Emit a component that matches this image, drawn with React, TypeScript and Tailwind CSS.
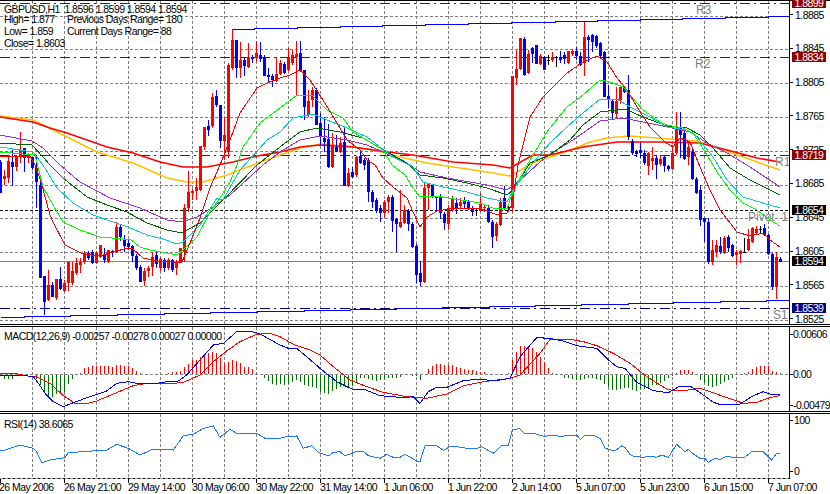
import type { ReactNode } from "react";

type Pt = [number, number];

const RED = "#ff0000";
const BLUE = "#0000ff";
const BLACK = "#000000";

// bars are 4px apart: [colour, wick top, body top, body bottom, wick bottom]
const r = (h: number, t: number, b: number, l: number) => [RED, h, t, b, l] as const;
const u = (h: number, t: number, b: number, l: number) => [BLUE, h, t, b, l] as const;
const d = (h: number, t: number, b: number, l: number) => [BLACK, h, t, b, l] as const;

const bars = [
  u(160, 162, 193, 193), r(170, 176, 179, 185), r(155, 161, 178, 183), u(150, 162, 167, 186), r(155, 157, 167, 171),
  r(132, 150, 157, 163), u(148, 148, 158, 172), r(153, 156, 158, 163), u(157, 157, 168, 170), u(155, 168, 182, 208),
  u(181, 185, 278, 278), u(276, 276, 302, 315), r(270, 285, 300, 301), u(282, 285, 297, 297), r(279, 279, 298, 300),
  u(267, 279, 289, 290), r(280, 283, 291, 292), r(262, 262, 283, 291), r(262, 271, 283, 285), r(258, 263, 273, 275),
  r(258, 262, 265, 273), r(251, 253, 262, 264), u(251, 253, 258, 260), u(250, 252, 263, 264), r(251, 253, 263, 264),
  r(245, 245, 257, 258), u(248, 255, 260, 263), r(250, 250, 262, 263), u(250, 251, 253, 257), r(222, 227, 252, 253),
  u(225, 227, 237, 241), u(235, 240, 246, 252), u(240, 243, 247, 250), u(245, 246, 256, 262), u(254, 256, 268, 270),
  u(265, 267, 282, 282), r(268, 271, 281, 286), r(266, 268, 271, 277), r(252, 257, 267, 276), u(252, 255, 264, 268),
  r(257, 259, 268, 271), u(258, 260, 268, 272), r(258, 260, 268, 270), u(259, 260, 270, 272), r(260, 262, 268, 275),
  r(248, 248, 262, 263), r(204, 208, 252, 262), r(171, 192, 208, 212), r(189, 191, 193, 200), r(178, 187, 191, 200),
  r(146, 146, 190, 191), r(127, 127, 147, 150), u(120, 126, 130, 136), r(93, 97, 126, 128), u(90, 96, 105, 107),
  u(105, 105, 141, 148), r(118, 135, 141, 160), r(63, 65, 152, 158), r(29, 40, 68, 70), u(40, 40, 68, 78),
  r(42, 60, 68, 78), u(58, 60, 66, 76), r(43, 57, 67, 68), u(55, 57, 59, 63), r(41, 53, 58, 62),
  u(42, 55, 59, 62), u(55, 57, 76, 76), u(68, 75, 77, 82), u(74, 76, 80, 87), r(57, 74, 81, 82),
  r(60, 63, 74, 75), u(62, 64, 73, 74), r(48, 58, 70, 71), r(50, 55, 63, 65), r(41, 54, 57, 96),
  u(41, 53, 71, 72), u(70, 70, 107, 120), r(90, 101, 115, 117), r(87, 90, 100, 107), u(88, 90, 125, 125),
  u(113, 123, 136, 145), u(117, 138, 142, 152), u(124, 139, 167, 168), r(133, 145, 167, 168), u(135, 147, 152, 152),
  r(137, 143, 152, 153), u(128, 142, 186, 186), r(168, 173, 186, 187), u(167, 172, 177, 178), r(156, 157, 175, 177),
  u(152, 156, 163, 164), u(158, 160, 165, 170), u(158, 160, 192, 202), u(190, 192, 202, 208), u(198, 200, 210, 213),
  u(205, 208, 213, 222), r(200, 202, 213, 218), r(195, 197, 202, 213), u(195, 197, 221, 232), u(218, 219, 224, 252),
  r(190, 222, 227, 228), r(205, 210, 223, 224), u(209, 211, 224, 231), u(222, 224, 247, 248), u(244, 246, 275, 283),
  u(261, 273, 282, 286), r(183, 188, 282, 283), r(183, 184, 188, 210), u(184, 185, 197, 198), u(196, 197, 198, 212),
  u(194, 196, 213, 219), u(212, 214, 223, 230), r(205, 208, 224, 230), r(196, 198, 210, 212), u(198, 203, 208, 214),
  r(198, 202, 206, 209), u(197, 201, 204, 209), u(200, 201, 208, 210), u(206, 208, 212, 216), d(208, 210, 211, 216),
  r(193, 204, 211, 212), r(205, 207, 208, 212), u(205, 208, 222, 223), u(220, 222, 237, 248), r(222, 224, 236, 241),
  r(198, 202, 225, 226), u(186, 198, 208, 210), d(206, 207, 208, 210), r(76, 76, 208, 212), r(50, 69, 78, 85),
  r(38, 38, 69, 70), u(37, 39, 75, 76), r(50, 54, 73, 74), u(47, 48, 54, 63), u(45, 45, 64, 64),
  r(54, 56, 64, 65), u(56, 57, 70, 70), d(55, 60, 61, 65), r(52, 57, 60, 62), d(56, 57, 58, 67),
  u(51, 57, 60, 63), u(52, 55, 59, 64), r(51, 51, 63, 64), r(49, 51, 54, 56), u(47, 51, 56, 60),
  u(52, 56, 65, 66), r(22, 37, 63, 76), u(35, 37, 40, 62), u(34, 35, 42, 52), u(35, 36, 46, 48),
  u(42, 43, 56, 58), u(51, 52, 97, 97), u(85, 96, 100, 108), u(99, 101, 113, 120), r(87, 101, 114, 118),
  r(86, 87, 100, 104), u(86, 87, 92, 93), u(75, 90, 137, 140), u(139, 141, 153, 155), u(150, 151, 154, 157),
  u(143, 150, 153, 158), u(150, 153, 163, 165), r(152, 153, 166, 175), r(147, 158, 161, 170), u(155, 158, 165, 179),
  r(155, 159, 164, 166), u(155, 157, 166, 172), u(165, 166, 169, 171), r(145, 153, 169, 170), r(112, 128, 153, 155),
  u(112, 127, 135, 158), u(131, 133, 159, 160), r(143, 147, 157, 165), u(150, 152, 179, 180), u(177, 179, 193, 194),
  u(185, 190, 220, 226), u(218, 218, 222, 242), u(218, 222, 262, 264), r(240, 250, 262, 265), r(240, 245, 252, 257),
  u(237, 246, 252, 254), r(236, 238, 253, 254), u(235, 237, 248, 252), u(244, 245, 256, 257), r(250, 252, 255, 265),
  r(250, 251, 254, 263), d(238, 252, 253, 253), r(229, 239, 250, 251), r(227, 228, 242, 243), r(226, 229, 233, 234),
  d(226, 229, 230, 233), u(224, 228, 235, 236), u(234, 235, 254, 255), u(253, 254, 287, 290), r(252, 257, 287, 299),
  u(257, 259, 262, 262),
];

const points = (s: string): Pt[] =>
  s.trim().split(/\s+/).map((p) => {
    const [x, y] = p.split(",").map(Number);
    return [x, y] as Pt;
  });

const fast = points("0,156 30,156 35,165 41,182 50,215 53,222 65,245 83,254 100,256 113,252 128,248 133,249 143,258 157,261 173,262 182,262 190,243 200,218 210,188 220,165 230,140 240,113 257,88 267,83 280,78 290,75 300,70 310,80 323,100 337,123 347,140 360,150 367,160 375,165 383,178 393,187 407,198 413,212 420,227 427,217 437,211 450,209 477,208 490,212 497,215 507,213 512,205 518,165 530,117 543,97 550,90 567,73 583,62 597,56 607,62 617,78 627,90 637,107 650,127 665,142 673,147 680,138 690,142 700,167 710,190 720,210 737,232 750,236 763,233 770,240 780,247");
const lime = points("0,152 35,155 43,187 53,205 63,222 80,230 100,237 123,239 130,239 140,247 150,250 177,255 183,250 197,237 210,212 220,198 230,182 237,165 243,147 260,123 280,108 297,95 313,96 327,110 343,118 353,132 370,142 383,150 392,165 405,175 413,188 420,197 437,196 467,201 480,203 493,208 507,208 513,192 527,165 547,132 550,128 567,107 583,95 600,80 610,82 623,87 643,110 660,122 667,125 683,128 693,133 707,155 717,172 730,190 743,203 757,210 770,220 780,226");
const cyan = points("0,147 33,152 43,165 57,188 73,203 93,215 113,222 128,227 147,235 163,239 177,244 183,242 200,225 217,198 223,200 240,170 267,140 280,132 293,118 313,114 327,120 347,128 367,137 380,147 393,157 413,167 423,182 443,187 467,192 487,198 507,202 513,190 533,163 550,143 567,127 583,113 600,99 617,99 630,107 650,117 667,127 687,130 697,137 713,157 727,180 743,197 763,203 780,208");
const darkGreen = points("0,143 32,145 43,157 50,165 63,178 87,197 107,205 127,212 147,223 167,230 182,233 200,223 223,200 257,165 280,147 300,132 317,128 340,132 363,138 380,148 407,163 420,175 443,178 467,183 487,188 507,195 513,190 530,163 550,155 570,140 583,125 600,112 625,109 643,117 667,126 687,128 700,135 713,148 730,168 750,180 780,195");
const purple = points("0,135 32,141 43,148 60,165 80,182 110,198 140,208 167,220 182,222 197,217 213,207 230,195 263,165 280,152 300,140 320,136 347,140 367,145 383,152 410,165 420,172 447,178 487,185 507,190 520,180 540,162 550,154 573,140 600,121 623,118 643,122 673,128 690,132 707,143 727,153 750,167 780,187");
const yellow = points("0,116 33,120 53,130 77,142 97,152 133,163 167,178 187,182 203,182 227,175 253,165 280,155 300,148 320,144 347,146 373,150 400,157 427,163 440,165 467,169 493,173 510,176 533,163 550,157 570,150 590,142 607,138 630,136 657,138 697,141 717,148 743,157 780,170");
const redSlow = points("0,117 33,122 50,128 67,133 107,147 133,153 160,162 183,167 207,167 233,162 257,156 280,152 300,147 320,145 353,147 387,152 413,155 453,162 493,165 510,168 533,155 550,155 583,147 617,142 660,142 700,143 727,150 757,158 780,162");

const stepped = (pts: Pt[]): Pt[] =>
  pts.flatMap(([x, y], i) => (i === 0 ? [[x, y] as Pt] : [[x, pts[i - 1][1]] as Pt, [x, y] as Pt]));

const r3Line = stepped(points("232,29.5 254,28.5 297,27.5 340,26.5 382,25.5 425,24.5 468,23.5 511,22.5 555,21.5 597,20.5 640,19.5 682,18.5 725,17.5 768,16.5 789,16.5"));
const s1Line = stepped(points("1,317.5 24,316.5 70,315.5 117,314.5 164,313.5 210,312.5 257,311.5 304,310.5 350,309.5 396,308.5 442,307.5 489,306.5 535,305.5 581,304.5 628,303.5 673,302.5 720,301.5 766,300.5 789,300.5"));

// measured on the 3x crops, the three crops start at x = 0, 280 and 550
const crop = (left: number, s: string): Pt[] =>
  points(s).map(([x, y]) => [left + x / 3, 325 + y / 3] as Pt);

const macdMain = [
  ...crop(0, "0,150 60,150 100,155 115,175 135,205 160,230 190,245 215,235 250,222 290,208 320,198 350,175 385,170 420,177 470,175 500,170 535,168 560,150 600,105 640,60 670,55 710,20 750,18 780,27 840,60"),
  ...crop(280, "25,70 50,70 80,95 120,130 170,170 215,192 250,192 300,212 370,218 400,215 420,235 445,200 470,187 500,187 550,167 600,162 640,168 690,160 720,95 770,38"),
  ...crop(550, "0,40 40,48 80,62 100,65 140,70 170,100 200,125 225,130 260,172 310,197 355,203 390,183 420,183 460,210 490,232 515,240 570,237 610,212 640,200 670,210 690,208"),
];
const macdSignal = [
  ...crop(0, "0,145 45,145 85,153 110,155 150,175 190,212 225,235 255,237 290,228 340,207 400,182 430,177 520,175 550,172 600,150 640,110 680,78 720,50 770,28 810,25 840,35"),
  ...crop(280, "40,58 90,75 120,90 160,125 210,165 260,185 310,202 380,215 440,220 500,207 550,182 610,170 690,160 720,150 780,85"),
  ...crop(550, "0,43 60,43 100,50 140,62 190,85 240,115 290,155 350,192 370,197 400,197 450,190 500,207 580,235 620,232 660,218 690,212"),
];
const rsi = [
  ...crop(0, "0,375 15,375 60,360 100,370 110,380 125,413 150,405 195,398 205,383 250,380 290,377 320,375 350,358 385,370 420,390 460,372 490,372 520,375 550,332 580,328 610,310 640,303 660,337 690,313 710,325 770,325 795,340 840,340"),
  ...crop(280, "20,335 50,333 70,370 95,362 115,382 145,393 160,382 180,380 195,392 215,385 230,379 250,379 265,392 300,400 320,388 340,397 360,397 375,388 410,408 420,410 435,362 470,362 490,376 510,365 530,365 560,370 590,370 605,365 640,385 665,362 685,362 697,316 717,310 735,327 760,325 795,335"),
  ...crop(550, "0,330 30,334 80,330 92,344 105,330 130,331 150,340 165,370 195,378 215,363 225,367 240,388 250,394 280,397 300,393 320,397 335,390 355,397 380,358 405,380 415,373 430,387 450,400 465,400 475,412 495,400 510,403 530,393 550,398 585,396 605,380 640,380 665,405 680,385 690,385"),
];

const hist = [
  0, -4, -4, -4, -1, 0, 0, 0, 0, -4, -10, -17, -22, -22, -19, -18, -17, -9, -4, 0,
  1, 6, 7, 8, 8, 8, 8, 8, 7, 9, 9, 8, 8, 6, 3, 1, 0, 0, 0, 0,
  0, 0, 1, 2, 2, 3, 7, 10, 14, 14, 17, 19, 21, 22, 21, 16, 11, 12, 14, 13,
  11, 7, 7, 5, 1, 0, -3, -6, -9, -10,
  -9, -10, -9, -7, -5, -7, -10, -11, -12, -13, -17, -18, -19, -16, -14, -12, -10, -13, -11, -8,
  -3, -3, -4, -5, -6, -5, -4, -3, -3, -3, -2, 0, 0, -1, -1, -5, 0, 5, 8, 10,
  10, 9, 9, 9, 7, 6, 5, 4, 4, 3, 2, 2, 0, 0, 0, 0, 0, 1, 14, 22,
  28, 28, 28, 26, 22, 17, 12, 6, 1, 0,
  0, -3, -3, -4, -5, -5, -4, -3, -3, -4, -5, -9, -12, -15, -15, -14, -13, -13, -15, -16,
  -14, -14, -13, -10, -10, -8, -6, -3, -1, 1, 4, 4, 4, 2, 0, -5, -8, -11, -12, -11,
  -9, -7, -5, -3, 0, 0, 1, 2, 5, 7, 8, 8, 8, 3, 2, 1,
];

const priceY = (p: number) => 15.5 + ((1.8885 - p) / 0.004) * 33.8;

const gridX = Array.from({ length: 24 }, (_, i) => 32 * (i + 1) + 0.5);
const gridPrices = [1.8885, 1.8845, 1.8805, 1.8765, 1.8725, 1.8685, 1.8645, 1.8605, 1.8565, 1.8525];

const Line = ({ pts, color, width = 1, smooth = false }: { pts: Pt[]; color: string; width?: number; smooth?: boolean }) => (
  <polyline
    points={pts.map(([x, y]) => `${x},${y}`).join(" ")}
    fill="none"
    stroke={color}
    strokeWidth={width}
    shapeRendering={smooth ? "auto" : "crispEdges"}
  />
);

const HLine = ({ y, color, dash, width = 1 }: { y: number; color: string; dash?: string; width?: number }) => (
  <line x1={0} x2={789} y1={y} y2={y} stroke={color} strokeWidth={width} strokeDasharray={dash} shapeRendering="crispEdges" />
);

const VGrid = ({ top, bottom }: { top: number; bottom: number }) => (
  <>
    {gridX.map((x) => (
      <line key={x} x1={x} x2={x} y1={top} y2={bottom} stroke="#808080" strokeDasharray="3 2" shapeRendering="crispEdges" />
    ))}
  </>
);

function MainChart() {
  return (
    <svg className="block h-[323px] w-[789px]" viewBox="0 1 789 323">
      <VGrid top={1} bottom={324} />
      {gridPrices.map((p) => (
        <HLine key={p} y={Math.round(priceY(p)) + 0.5} color="#808080" dash="3 2" />
      ))}
      <HLine y={3.5} color="#8b0000" dash="10 4 2 4" />
      <HLine y={57.5} color="#8b0000" dash="10 4 2 4" />
      <HLine y={155.5} color="#8b0000" dash="10 4 2 4" />
      <HLine y={210.5} color="#000000" dash="3 2" />
      <HLine y={261.5} color="#808080" />
      <HLine y={308.5} color="#000080" dash="10 4 2 4" />
      <Line pts={r3Line} color="#0000ff" />
      <Line pts={s1Line} color="#0000ff" />
      <Line pts={yellow} color="#ffc000" width={1.5} smooth />
      <Line pts={redSlow} color="#ff0000" width={1.5} smooth />
      {bars.map(([c, h, t, b, l], i) => (
        <g key={i} shapeRendering="crispEdges">
          <rect x={4 * i} y={h} width={1} height={l - h} fill={c} />
          <rect x={4 * i - 1} y={t} width={3} height={Math.max(b - t, 1)} fill={c} />
        </g>
      ))}
      <Line pts={purple} color="#9932cc" />
      <Line pts={darkGreen} color="#006400" />
      <Line pts={cyan} color="#00cccc" />
      <Line pts={lime} color="#00ff00" />
      <Line pts={fast} color="#ff0000" />
    </svg>
  );
}

function MacdChart() {
  return (
    <svg className="block h-[84px] w-[789px]" viewBox="0 327 789 84">
      <VGrid top={327} bottom={411} />
      <HLine y={374.5} color="#808080" dash="3 2" />
      {hist.map((v, i) =>
        v === 0 ? null : (
          <rect
            key={i}
            x={4 * i}
            y={v > 0 ? 374 - v : 375}
            width={1}
            height={Math.abs(v)}
            fill={v > 0 ? "#ff0000" : "#007000"}
            shapeRendering="crispEdges"
          />
        ),
      )}
      <Line pts={macdSignal} color="#ff0000" />
      <Line pts={macdMain} color="#0000ff" />
    </svg>
  );
}

function RsiChart() {
  return (
    <svg className="block h-[65px] w-[789px]" viewBox="0 414 789 65">
      <VGrid top={414} bottom={479} />
      <HLine y={478.5} color="#000000" />
      <HLine y={478.5} color="#a0a0a0" dash="3 2" />
      <Line pts={rsi} color="#1e78ff" />
    </svg>
  );
}

const AxisLabel = ({ className = "", children }: { className?: string; children: ReactNode }) => (
  <div className={`flex h-[12px] shrink-0 items-center ${className}`}>
    <span className="h-px w-[3px] bg-black" />
    <span>{children}</span>
  </div>
);

const PriceBox = ({ y, className, children }: { y: number; className: string; children: ReactNode }) => (
  <div
    className={`absolute left-[2px] flex h-[10px] w-[34px] items-center justify-center text-white ${className}`}
    style={{ top: y - 5 }}
  >
    {children}
  </div>
);

const ChartTag = ({ className, children }: { className: string; children: ReactNode }) => (
  <span className={`absolute whitespace-pre text-[12px] leading-[12px] tracking-normal text-[#808080] ${className}`}>{children}</span>
);

const times = [
  "26 May 2006",
  "26 May 21:00",
  "29 May 14:00",
  "30 May 06:00",
  "30 May 22:00",
  "31 May 14:00",
  "1 Jun 06:00",
  "1 Jun 22:00",
  "2 Jun 14:00",
  "5 Jun 07:00",
  "5 Jun 23:00",
  "6 Jun 15:00",
  "7 Jun 07:00",
];

export default function App() {
  return (
    <div className="flex h-[494px] w-[830px] flex-col overflow-hidden bg-white font-['Liberation_Sans',sans-serif] text-[10.5px] leading-[12px] tracking-[-0.55px] text-black">
      {/* price pane */}
      <div className="mb-px flex h-[325px] shrink-0 border-y border-black">
        <div className="relative h-full w-[790px] shrink-0 overflow-hidden border-r border-black">
          <MainChart />
          <div className="absolute left-[4px] top-[2px] flex flex-col">
            <div className="whitespace-pre">GBPUSD,H1  1.8596 1.8599 1.8594 1.8594</div>
            <div className="-mt-[2px] grid grid-cols-[63px_1fr] whitespace-pre">
              <span>High= 1.877</span>
              <span>Previous Days Range= 180</span>
              <span>Low= 1.859</span>
              <span>Current Days Range= 88</span>
              <span>Close= 1.8603</span>
            </div>
          </div>
          <ChartTag className="left-[696px] top-[3px]">R3</ChartTag>
          <ChartTag className="left-[695px] top-[57px]">R2</ChartTag>
          <ChartTag className="left-[775px] top-[155px]">R1</ChartTag>
          <ChartTag className="left-[748px] top-[210px]">Pivot  1.8654</ChartTag>
          <ChartTag className="left-[773px] top-[308px]">S1</ChartTag>
        </div>
        <div className="relative flex flex-1 flex-col pt-[7.5px]">
          {gridPrices.map((p) => (
            <div key={p} className="h-[33.8px] shrink-0">
              <AxisLabel className="gap-[2px]">{p.toFixed(4)}</AxisLabel>
            </div>
          ))}
          <PriceBox y={2} className="bg-[#8b0000]">1.8899</PriceBox>
          <PriceBox y={56} className="bg-[#8b0000]">1.8834</PriceBox>
          <PriceBox y={154} className="bg-[#8b0000]">1.8719</PriceBox>
          <PriceBox y={209} className="bg-black">1.8654</PriceBox>
          <PriceBox y={260} className="bg-black">1.8594</PriceBox>
          <PriceBox y={307} className="bg-[#000080]">1.8539</PriceBox>
        </div>
      </div>

      {/* MACD pane */}
      <div className="mb-px flex h-[86px] shrink-0 border-y border-black">
        <div className="relative h-full w-[790px] shrink-0 overflow-hidden border-r border-black">
          <MacdChart />
          <div className="absolute left-[4px] top-[3px] whitespace-pre">MACD(12,26,9) -0.00257 -0.00278 0.00027 0.00000</div>
        </div>
        <div className="flex flex-1 flex-col pt-px">
          <AxisLabel>0.00606</AxisLabel>
          <AxisLabel className="mt-[28px]">0.00</AxisLabel>
          <AxisLabel className="mt-[19px]">-0.00479</AxisLabel>
        </div>
      </div>

      {/* RSI pane */}
      <div className="flex h-[66px] shrink-0 border-t border-black">
        <div className="relative h-full w-[790px] shrink-0 overflow-hidden border-r border-black">
          <RsiChart />
          <div className="absolute left-[4px] top-[4px] whitespace-pre">RSI(14) 38.6065</div>
        </div>
        <div className="flex flex-1 flex-col">
          <AxisLabel className="gap-[1px]">100</AxisLabel>
          <AxisLabel className="mt-[39px] gap-[1px]">0</AxisLabel>
        </div>
      </div>

      {/* time axis */}
      <div className="flex h-[15px] shrink-0 pt-[2px]">
        {times.map((t, i) => (
          <div key={t} className="relative w-[64px] shrink-0 whitespace-pre">
            <span className="absolute left-0 top-[-2px] h-[4px] w-px bg-black" />
            <span className={i === 0 ? "-ml-px" : ""}>{t}</span>
          </div>
        ))}
      </div>
    </div>
  );
}
